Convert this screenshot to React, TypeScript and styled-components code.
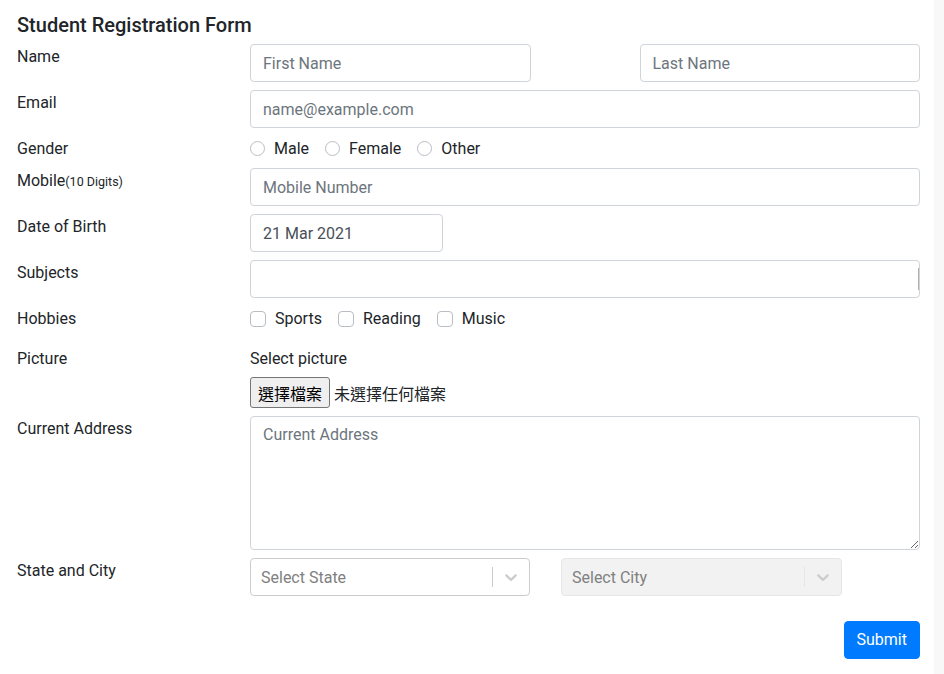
import React from "react";
import styled, { createGlobalStyle } from "styled-components";

const Global = createGlobalStyle`
  html, body { margin: 0; padding: 0; background: #fff; }
  body {
    font-family: Roboto, "Liberation Sans", "Noto Sans CJK TC", sans-serif;
    font-size: 16px;
    line-height: 24px;
    color: #212529;
  }
  * { box-sizing: border-box; }
`;

const Shell = styled.div`
  display: flex;
  min-height: 674px;
`;

const Main = styled.div`
  flex: 1;
  padding: 12px 0 0 17px;
`;

const Strip = styled.div`
  width: 10px;
  background: #f8f8f8;
`;

const Form = styled.form`
  width: 903px;
  display: flex;
  flex-direction: column;
`;

const Title = styled.h5`
  margin: 0 0 8px;
  padding-top: 1px;
  height: 24px;
  font-size: 20px;
  line-height: 24px;
  font-weight: 500;
  color: #212529;
`;

const Row = styled.div<{ $mb?: number }>`
  display: grid;
  grid-template-columns: 233px 1fr;
  align-items: start;
  margin-bottom: ${(p) => p.$mb ?? 8}px;
`;

const Label = styled.label`
  display: block;
  height: 24px;
  font-size: 16px;
  line-height: 24px;
  padding-top: 1px;
  white-space: nowrap;
`;

const Small = styled.small`
  font-size: 12.5px;
`;

const Field = styled.div`
  display: flex;
  flex-direction: column;
`;

const Pair = styled.div<{ $cols: string; $gap: number }>`
  display: grid;
  grid-template-columns: ${(p) => p.$cols};
  column-gap: ${(p) => p.$gap}px;
`;

const Input = styled.input<{ $w?: number }>`
  height: 38px;
  width: ${(p) => (p.$w ? `${p.$w}px` : "100%")};
  padding: 6px 12px;
  border: 1px solid #ced4da;
  border-radius: 4px;
  font-family: inherit;
  font-size: 16px;
  line-height: 24px;
  color: #495057;
  background: #fff;
  outline: none;
  &::placeholder { color: #6c757d; opacity: 1; }
`;

const TextArea = styled.textarea`
  width: 100%;
  height: 134px;
  padding: 6px 12px;
  border: 1px solid #ced4da;
  border-radius: 4px;
  font-family: inherit;
  font-size: 16px;
  line-height: 24px;
  color: #495057;
  resize: vertical;
  outline: none;
  display: block;
  &::placeholder { color: #6c757d; opacity: 1; }
`;

const Options = styled.div`
  display: flex;
  align-items: center;
  gap: 16px;
  height: 24px;
  padding-top: 1px;
`;

const Option = styled.label`
  display: flex;
  align-items: center;
  gap: 9px;
`;

const Radio = styled.span`
  width: 15px;
  height: 15px;
  border: 1px solid #b9bec4;
  border-radius: 50%;
  background: #fff;
`;

const Check = styled.span`
  width: 16px;
  height: 16px;
  border: 1px solid #b9bec4;
  border-radius: 4px;
  background: #fff;
`;

const AutoBox = styled.div`
  height: 38px;
  border: 1px solid #ced4da;
  border-radius: 4px;
  display: flex;
  justify-content: flex-end;
  align-items: center;
`;

const Caret = styled.span`
  width: 1.5px;
  height: 22px;
  background: #b0b0b0;
`;

const PlainText = styled.div`
  height: 24px;
  line-height: 24px;
  padding-top: 1px;
  margin-bottom: 7px;
`;

const FileLine = styled.div`
  display: flex;
  align-items: center;
  gap: 4px;
  height: 31px;
  font-family: "Noto Sans CJK TC", sans-serif;
  font-size: 16px;
`;

const FileButton = styled.button`
  height: 31px;
  padding: 0 7px;
  border: 1px solid #767676;
  border-radius: 3px;
  background: #efefef;
  font-family: "Noto Sans CJK TC", sans-serif;
  font-size: 16px;
  color: #000;
`;

const SelectBox = styled.div<{ $disabled?: boolean }>`
  height: 38px;
  display: flex;
  align-items: center;
  border: 1px solid ${(p) => (p.$disabled ? "#e6e6e6" : "#cccccc")};
  background: ${(p) => (p.$disabled ? "#f2f2f2" : "#fff")};
  border-radius: 4px;
`;

const Placeholder = styled.div`
  flex: 1;
  padding: 3px 8px 1px;
  margin-left: 2px;
  color: #808080;
  font-size: 16px;
`;

const Sep = styled.span<{ $disabled?: boolean }>`
  width: 1px;
  align-self: stretch;
  margin: 8px 0;
  background: ${(p) => (p.$disabled ? "#e6e6e6" : "#cccccc")};
`;

const Indicator = styled.div`
  padding: 8px;
  display: flex;
  color: #cccccc;
`;

const Footer = styled.div`
  display: flex;
  justify-content: flex-end;
  margin-top: 25px;
`;

const Submit = styled.button`
  height: 38px;
  padding: 6px 12px;
  border: 1px solid #007bff;
  border-radius: 4px;
  background: #007bff;
  color: #fff;
  font-family: inherit;
  font-size: 16px;
  line-height: 24px;
`;

const Chevron = () => (
  <svg width="20" height="20" viewBox="0 0 20 20" fill="currentColor">
    <path d="M4.516 7.548c0.436-0.446 1.043-0.481 1.576 0l3.908 3.747 3.908-3.747c0.533-0.481 1.141-0.446 1.574 0 0.436 0.445 0.408 1.197 0 1.615-0.406 0.418-4.695 4.502-4.695 4.502-0.217 0.223-0.502 0.335-0.787 0.335s-0.57-0.112-0.789-0.335c0 0-4.287-4.084-4.695-4.502s-0.436-1.170 0-1.615z" />
  </svg>
);

const Select = ({ text, disabled }: { text: string; disabled?: boolean }) => (
  <SelectBox $disabled={disabled}>
    <Placeholder>{text}</Placeholder>
    <Sep $disabled={disabled} />
    <Indicator>
      <Chevron />
    </Indicator>
  </SelectBox>
);

export default function App() {
  return (
    <>
      <Global />
      <Shell>
        <Main>
          <Form onSubmit={(e) => e.preventDefault()}>
            <Title>Student Registration Form</Title>
            <Row>
              <Label>Name</Label>
              <Pair $cols="1fr 1fr" $gap={109}>
                <Input placeholder="First Name" />
                <Input placeholder="Last Name" />
              </Pair>
            </Row>
            <Row>
              <Label>Email</Label>
              <Input placeholder="name@example.com" />
            </Row>
            <Row>
              <Label>Gender</Label>
              <Options>
                <Option><Radio />Male</Option>
                <Option><Radio />Female</Option>
                <Option><Radio />Other</Option>
              </Options>
            </Row>
            <Row>
              <Label>
                Mobile<Small>(10 Digits)</Small>
              </Label>
              <Input placeholder="Mobile Number" />
            </Row>
            <Row>
              <Label>Date of Birth</Label>
              <Input $w={193} defaultValue="21 Mar 2021" />
            </Row>
            <Row>
              <Label>Subjects</Label>
              <AutoBox>
                <Caret />
              </AutoBox>
            </Row>
            <Row $mb={16}>
              <Label>Hobbies</Label>
              <Options>
                <Option><Check />Sports</Option>
                <Option><Check />Reading</Option>
                <Option><Check />Music</Option>
              </Options>
            </Row>
            <Row>
              <Label>Picture</Label>
              <Field>
                <PlainText>Select picture</PlainText>
                <FileLine>
                  <FileButton type="button">選擇檔案</FileButton>
                  未選擇任何檔案
                </FileLine>
              </Field>
            </Row>
            <Row>
              <Label>Current Address</Label>
              <TextArea placeholder="Current Address" />
            </Row>
            <Row $mb={0}>
              <Label>State and City</Label>
              <Pair $cols="280px 281px" $gap={31}>
                <Select text="Select State" />
                <Select text="Select City" disabled />
              </Pair>
            </Row>
            <Footer>
              <Submit type="submit">Submit</Submit>
            </Footer>
          </Form>
        </Main>
        <Strip />
      </Shell>
    </>
  );
}
